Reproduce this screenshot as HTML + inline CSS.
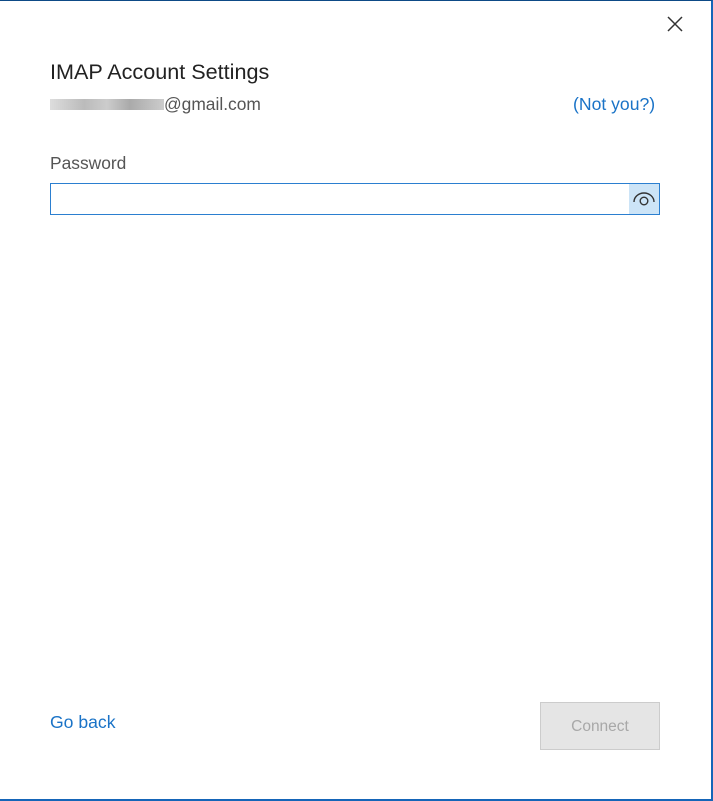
<!DOCTYPE html>
<html><head><style>
html,body{margin:0;padding:0;width:713px;height:801px;overflow:hidden;background:#fff;font-family:"Liberation Sans",sans-serif}
.frame{position:absolute;left:0;top:0;border-top:1px solid #0d4a86;border-right:2px solid #1565b8;border-bottom:2px solid #1565b8;box-sizing:border-box;width:713px;height:801px}
.t{position:absolute;white-space:nowrap}
</style></head><body>
<div class="frame"></div>
<svg class="t" style="left:666px;top:15px" width="18" height="18" viewBox="0 0 18 18"><path d="M2 2L16 16M16 2L2 16" stroke="#333" stroke-width="1.5"/></svg>
<div class="t" style="left:50px;top:59px;font-size:21.6px;color:#222">IMAP Account Settings</div>
<div class="t" style="left:50px;top:94px;font-size:17.4px;color:#555"><span style="display:inline-block;width:114px;height:11px;background:linear-gradient(90deg,#ddd,#bbb 30%,#ccc 50%,#aaa 70%,#ccc);vertical-align:0px"></span>@gmail.com</div>
<div class="t" style="left:573px;top:94px;font-size:17.6px;color:#1a73c7">(Not you?)</div>
<div class="t" style="left:50px;top:153px;font-size:17.4px;color:#555">Password</div>
<div class="t" style="left:50px;top:183px;width:610px;height:32px;border:1px solid #2b7fd0;box-sizing:border-box"></div>
<div class="t" style="left:629px;top:184px;width:30px;height:30px;background:#cce4f7"></div>
<svg class="t" style="left:631px;top:186px" width="26" height="26" viewBox="0 0 26 26"><path d="M3 16A10 9 0 0 1 23 16" fill="none" stroke="#333" stroke-width="1.4"/><circle cx="13" cy="15" r="3.8" fill="none" stroke="#333" stroke-width="1.4"/></svg>
<div class="t" style="left:50px;top:712px;font-size:17.6px;color:#1a73c7">Go back</div>
<div class="t" style="left:540px;top:702px;width:120px;height:48px;background:#e5e5e5;border:1px solid #ccc;box-sizing:border-box;color:#a8a8a8;font-size:15.5px;text-align:center;line-height:48px">Connect</div>
</body></html>
